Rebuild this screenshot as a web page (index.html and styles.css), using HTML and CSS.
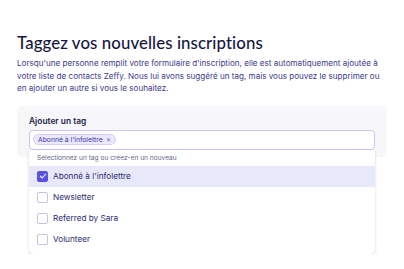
FILE: index.html
```html
<!DOCTYPE html>
<html lang="fr">
<head>
  <meta charset="UTF-8">
  <meta name="viewport" content="width=device-width, initial-scale=1.0">
  <title>Taggez vos nouvelles inscriptions</title>
  <link rel="stylesheet" href="styles.css">
</head>
<body>

  <h1>Taggez vos nouvelles inscriptions</h1>
  <p class="intro">Lorsqu'une personne remplit votre formulaire d'inscription, elle est automatiquement ajoutée à votre liste de contacts Zeffy. Nous lui avons suggéré un tag, mais vous pouvez le supprimer ou en ajouter un autre si vous le souhaitez.</p>

  <div class="panel">
    <div class="label">Ajouter un tag</div>
    <div class="field">
      <span class="chip">Abonné à l'infolettre <span class="chip-x">&#x2715;</span></span>
    </div>
  </div>

  <div class="menu">
    <div class="hint">Sélectionnez un tag ou créez-en un nouveau</div>
    <div class="option selected">
      <span class="box">
        <svg width="8" height="8" viewBox="0 0 8 8"><path d="M1.3 4.2 L3.2 6 L6.8 2" fill="none" stroke="#fff" stroke-width="1.1" stroke-linecap="round" stroke-linejoin="round"/></svg>
      </span>
      Abonné à l'infolettre
    </div>
    <div class="option"><span class="box"></span>Newsletter</div>
    <div class="option"><span class="box"></span>Referred by Sara</div>
    <div class="option"><span class="box"></span>Volunteer</div>
  </div>

</body>
</html>
```

FILE: styles.css
```css
body {
  margin: 0;
  padding: 33px 17px 0;
  font-family: 'Inter', sans-serif;
  background-color: #ffffff;
  color: #1c1b4a;
}

h1 {
  font-family: 'Lato', sans-serif;
  font-size: 16.8px;
  font-weight: 500;
  margin: 0;
  line-height: 20px;
  letter-spacing: 0.1px;
  color: #17163f;
}

.intro {
  margin: 4px 0 0;
  font-size: 8.1px;
  line-height: 12.5px;
  color: #3c3a8a;
}

.panel {
  margin-top: 11px;
  height: 38px;
  padding: 9px 12px 4px;
  background-color: #f7f7fa;
  border-radius: 5px;
}

.label {
  font-size: 8.4px;
  font-weight: 600;
  line-height: 12px;
  color: #1c1b4a;
}

.field {
  margin-top: 3px;
  height: 18px;
  padding: 0 3px;
  display: flex;
  align-items: center;
  background-color: #ffffff;
  border: 1px solid #c9c5f6;
  border-radius: 4px;
}

.chip {
  display: inline-flex;
  align-items: center;
  gap: 3px;
  height: 9px;
  padding: 0 4px;
  font-size: 6.8px;
  color: #3e37a5;
  background-color: #eae8fc;
  border: 1px solid #d3cffa;
  border-radius: 6px;
}

.chip-x {
  font-size: 5.5px;
  color: #6c66c9;
}

.menu {
  position: relative;
  margin: -7px 12px 0;
  padding-bottom: 4px;
  background-color: #ffffff;
  border-radius: 0 0 5px 5px;
  box-shadow: 0 1px 3px rgba(30, 30, 60, 0.18);
}

.hint {
  padding: 2px 8px 0;
  height: 14px;
  font-size: 6.6px;
  line-height: 12px;
  color: #67668a;
}

.option {
  display: flex;
  align-items: center;
  gap: 5px;
  height: 21px;
  padding: 0 8px;
  font-size: 8.2px;
  color: #2d2b6e;
}

.option.selected {
  background-color: #e8e8fb;
}

.box {
  width: 9px;
  height: 9px;
  display: flex;
  align-items: center;
  justify-content: center;
  background-color: #ffffff;
  border: 1px solid #c7c4dc;
  border-radius: 2px;
}

.selected .box {
  background-color: #5a50e4;
  border-color: #5a50e4;
}
```
